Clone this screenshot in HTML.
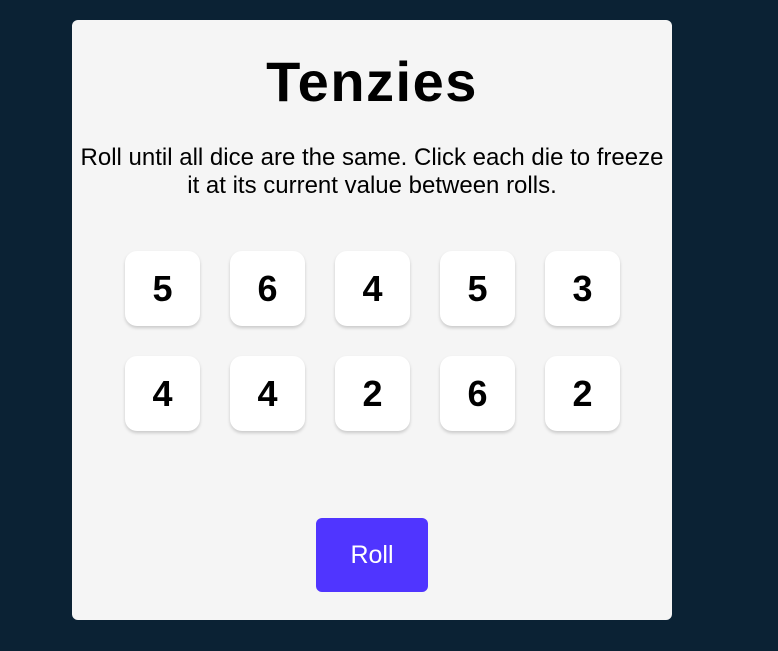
<!DOCTYPE html>
<html><head><style>
html,body{margin:0;padding:0;width:778px;height:651px;background:#0B2234;overflow:hidden;font-family:"Liberation Sans",Arial,sans-serif;}
.card{position:absolute;left:72px;top:20px;width:600px;height:600px;background:#F5F5F5;border-radius:6px;}
h1{position:absolute;top:32px;left:0;width:100%;margin:0;text-align:center;font-size:56px;font-weight:bold;line-height:60px;letter-spacing:1.5px;color:#000;}
p{position:absolute;top:124px;left:0;width:100%;margin:0;text-align:center;font-size:24px;line-height:28px;color:#000;}
.die{position:absolute;width:75px;height:75px;background:#fff;border-radius:12px;box-shadow:0 2px 3px rgba(0,0,0,0.18);display:flex;align-items:center;justify-content:center;font-size:36px;font-weight:bold;color:#000;}
.btn{position:absolute;left:244px;top:498px;width:112px;height:74px;background:#5035FF;border-radius:6px;color:#fff;font-size:25px;display:flex;align-items:center;justify-content:center;}
</style></head><body>
<div class="card">
<h1>Tenzies</h1>
<p>Roll until all dice are the same. Click each die to freeze<br>it at its current value between rolls.</p>
<div class="die" style="left:53px;top:231px">5</div>
<div class="die" style="left:158px;top:231px">6</div>
<div class="die" style="left:263px;top:231px">4</div>
<div class="die" style="left:368px;top:231px">5</div>
<div class="die" style="left:473px;top:231px">3</div>
<div class="die" style="left:53px;top:336px">4</div>
<div class="die" style="left:158px;top:336px">4</div>
<div class="die" style="left:263px;top:336px">2</div>
<div class="die" style="left:368px;top:336px">6</div>
<div class="die" style="left:473px;top:336px">2</div>
<div class="btn">Roll</div>
</div>
</body></html>
